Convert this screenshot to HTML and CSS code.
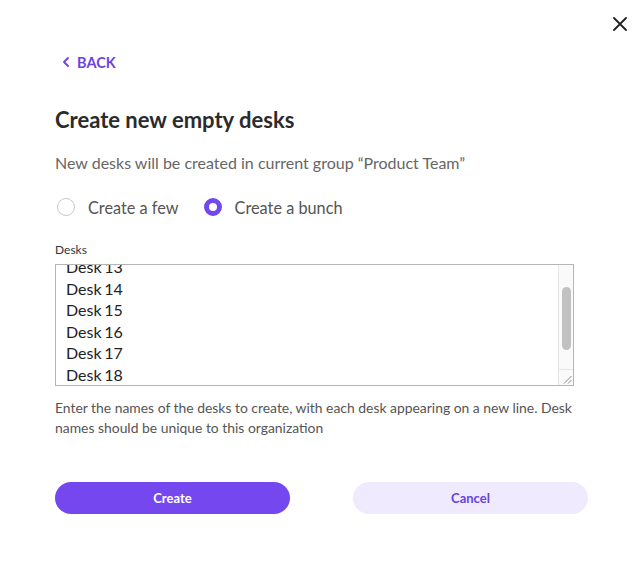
FILE: index.html
```html
<!DOCTYPE html>
<html lang="en">
<head>
<meta charset="utf-8">
<title>Create new empty desks</title>
<link rel="stylesheet" href="styles.css">
</head>
<body>
<div class="dialog">
  <button class="close" aria-label="Close">
    <svg width="14" height="14" viewBox="0 0 14 14"><path d="M1 1 L13 13 M13 1 L1 13" stroke="#222" stroke-width="1.8" stroke-linecap="round" fill="none"/></svg>
  </button>
  <a class="back" href="#">
    <svg width="8" height="10" viewBox="0 0 8 10"><path d="M6 1 L2 5 L6 9" stroke="currentColor" stroke-width="1.8" fill="none" stroke-linecap="round" stroke-linejoin="round"/></svg>
    <span>BACK</span>
  </a>
  <h1 class="title">Create new empty desks</h1>
  <p class="sub">New desks will be created in current group “Product Team”</p>
  <div class="radios">
    <label class="radio"><span class="dot"></span><span>Create a few</span></label>
    <label class="radio"><span class="dot checked"></span><span>Create a bunch</span></label>
  </div>
  <div class="field-label">Desks</div>
  <div class="ta-wrap">
  <textarea class="desks" id="desks">Desk 1
Desk 2
Desk 3
Desk 4
Desk 5
Desk 6
Desk 7
Desk 8
Desk 9
Desk 10
Desk 11
Desk 12
Desk 13
Desk 14
Desk 15
Desk 16
Desk 17
Desk 18
Desk 19
Desk 20
Desk 21
Desk 22
Desk 23
Desk 24
Desk 25
Desk 26
Desk 27
Desk 28
Desk 29
Desk 30</textarea>
    <div class="scrollbar" aria-hidden="true">
      <div class="track"><div class="thumb"></div></div>
      <div class="corner">
        <svg width="14" height="15" viewBox="0 0 14 15"><path d="M5 13.5 L12.5 6 M9 13.5 L12.5 10" stroke="#8a8a8a" stroke-width="1" fill="none"/></svg>
      </div>
    </div>
  </div>
  <p class="help">Enter the names of the desks to create, with each desk appearing on a new line. Desk names should be unique to this organization</p>
  <div class="actions">
    <button class="btn primary">Create</button>
    <button class="btn secondary">Cancel</button>
  </div>
</div>
<script src="script.js"></script>
</body>
</html>
```
FILE: styles.css
```css
* { box-sizing: border-box; }
html, body { margin: 0; padding: 0; background: #fff; }
body { font-family: Lato, "Open Sans", sans-serif; color: #2b2b2b; }
.dialog {
  position: relative;
  width: 644px;
  height: 562px;
  padding: 52px 56px 0 55px;
}
.close {
  position: absolute;
  top: 17px;
  right: 17px;
  width: 14px;
  height: 14px;
  padding: 0;
  border: 0;
  background: none;
  display: flex;
}
.back {
  display: flex;
  align-items: center;
  gap: 7px;
  height: 20px;
  padding-left: 7px;
  color: #6c42e4;
  font-weight: 700;
  font-size: 14.5px;
  text-decoration: none;
}
.title {
  margin: 34px 0 0;
  font-size: 22px;
  line-height: 28px;
  font-weight: 700;
  color: #2b2b2b;
}
.sub {
  margin: 18px 0 0;
  font-size: 16px;
  line-height: 22px;
  color: #666;
}
.radios {
  margin-top: 21px;
  display: flex;
  align-items: center;
  gap: 23px;
  height: 24px;
}
.radio {
  display: flex;
  align-items: center;
  gap: 13px;
  font-size: 16.3px;
  color: #555;
  padding-left: 2px;
}
.dot {
  width: 18px;
  height: 18px;
  border-radius: 50%;
  border: 1px solid #c9c9c9;
  background: #fff;
}
.dot.checked {
  border: 5.5px solid #7247ee;
  background: #fff;
}
.field-label {
  margin-top: 23px;
  font-size: 12px;
  line-height: 16px;
  color: #333;
}
.ta-wrap {
  position: relative;
  margin-top: 6px;
  width: 519px;
  height: 122px;
}
.desks {
  display: block;
  width: 519px;
  height: 122px;
  padding: 0 0 0 10px;
  border: 1px solid #b5b5b5;
  border-radius: 0;
  font-family: Lato, "Open Sans", sans-serif;
  font-size: 16px;
  line-height: 21.5px;
  word-spacing: -1.5px;
  color: #222;
  resize: vertical;
  outline: none;
  scrollbar-width: none;
}
.scrollbar {
  position: absolute;
  top: 1px;
  right: 1px;
  bottom: 1px;
  width: 15px;
  display: flex;
  flex-direction: column;
  background: #fafafa;
  border-left: 1px solid #e6e6e6;
  pointer-events: none;
}
.track {
  flex: 1;
  padding: 22px 0 0 3px;
}
.thumb {
  width: 9px;
  height: 63px;
  border-radius: 5px;
  background: #c1c1c1;
}
.corner {
  height: 16px;
  border-top: 1px solid #e6e6e6;
  display: flex;
}
.help {
  margin: 12px 0 0;
  font-size: 13.9px;
  line-height: 20px;
  color: #555;
}
.actions {
  margin-top: 44px;
  display: flex;
  justify-content: space-between;
}
.btn {
  width: 235px;
  height: 32px;
  border: 0;
  border-radius: 16px;
  font-family: Lato, "Open Sans", sans-serif;
  font-size: 13px;
  font-weight: 700;
}
.primary { background: #7448ee; color: #fff; }
.secondary { background: #efeafd; color: #6a42dc; }
```
FILE: script.js
```js
document.getElementById('desks').scrollTop = 267;
```
